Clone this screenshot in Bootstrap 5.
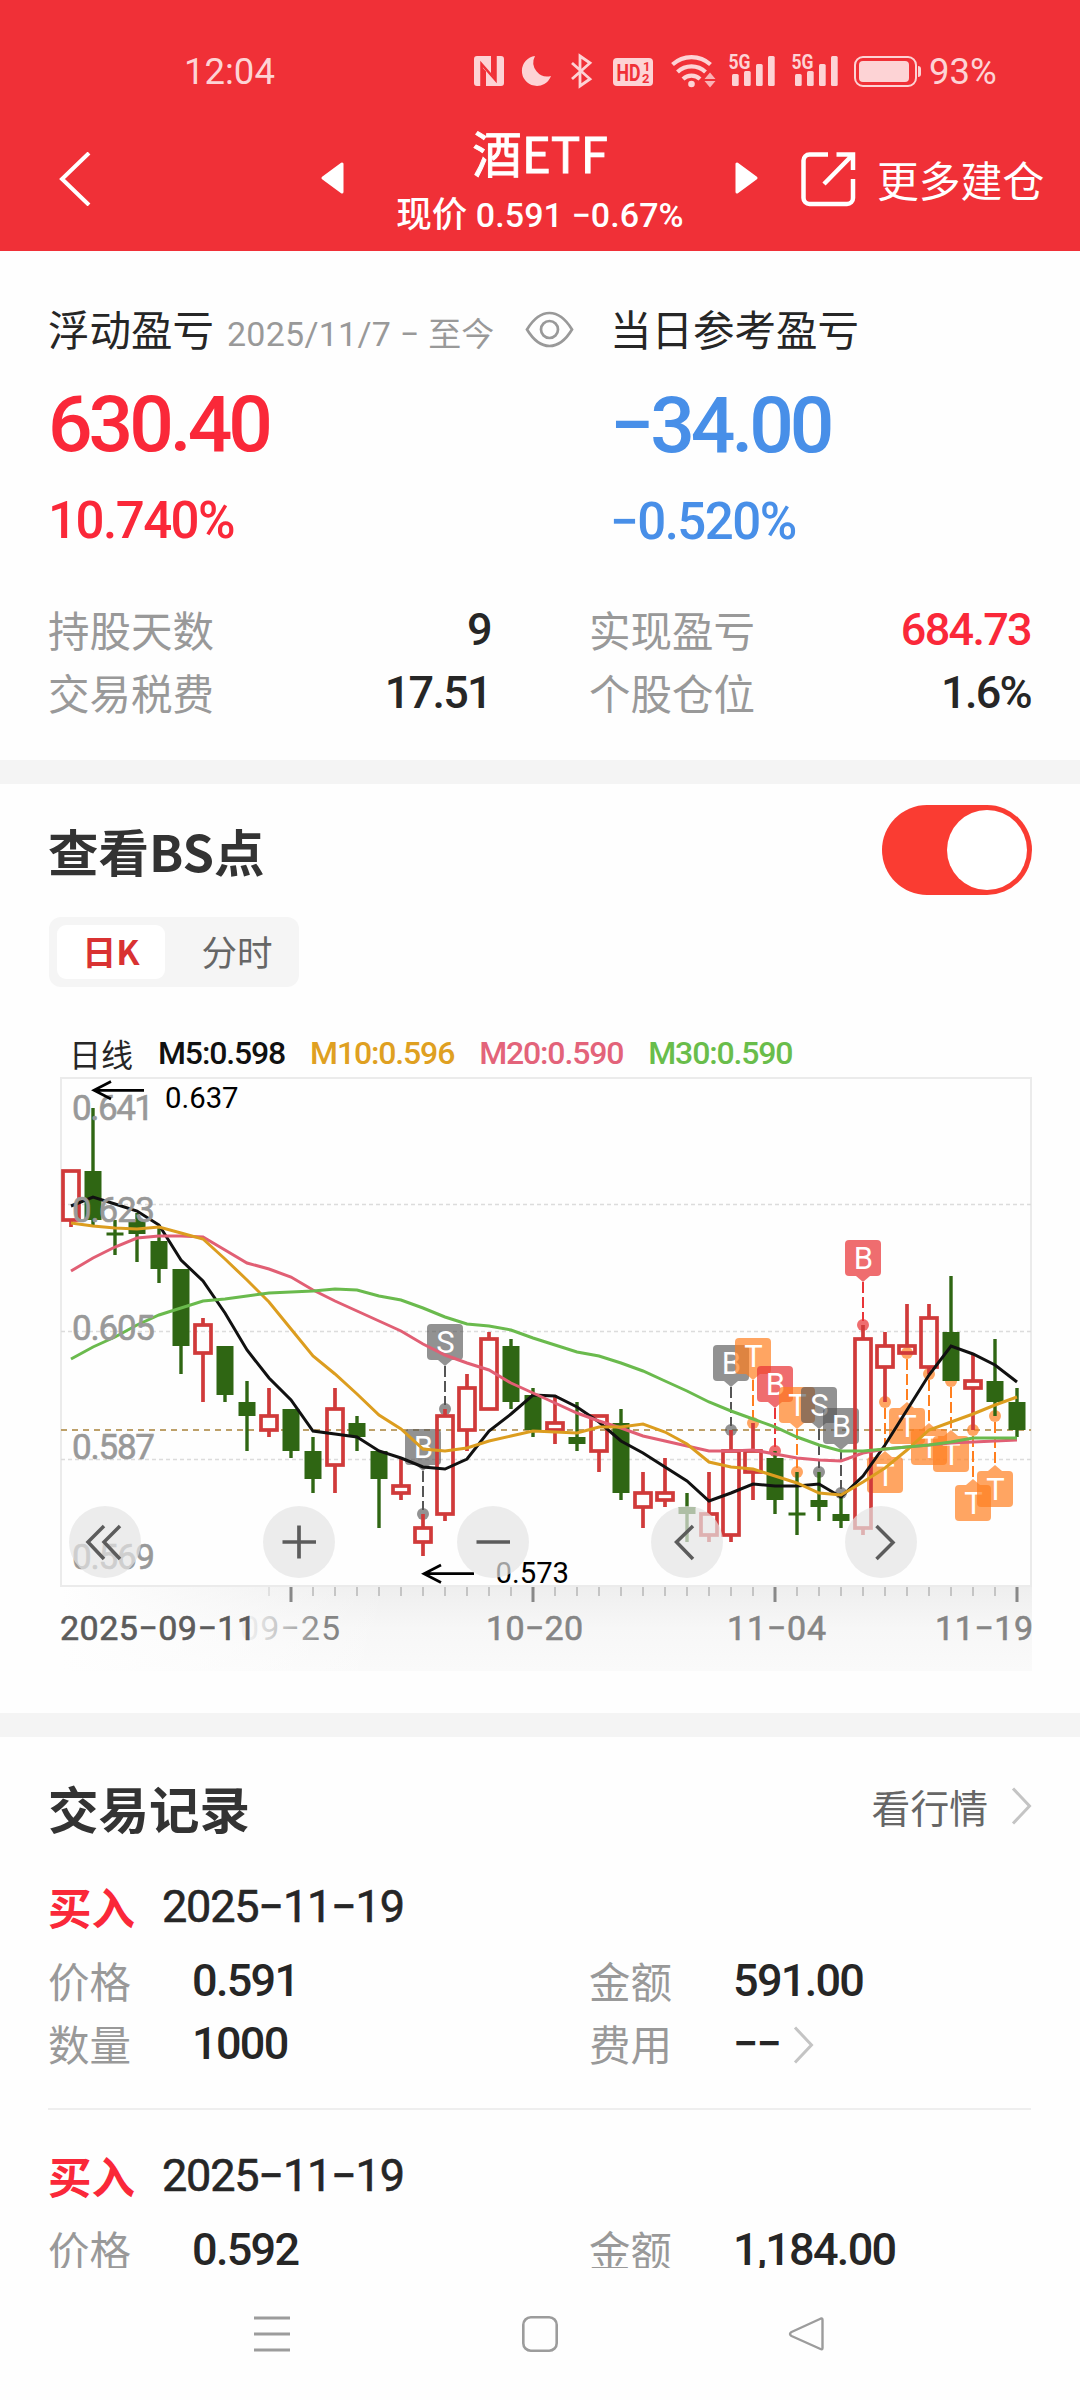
<!DOCTYPE html>
<html lang="zh-CN">
<head>
<meta charset="utf-8">
<meta name="viewport" content="width=device-width, initial-scale=1">
<title>酒ETF</title>
<link href="https://cdn.jsdelivr.net/npm/bootstrap@5.3.0/dist/css/bootstrap.min.css" rel="stylesheet">
<style>
  body { width: 1080px; height: 2400px; overflow: hidden; background: #fefefe; color: #262626; font-family: Roboto, "Noto Sans CJK SC", sans-serif; line-height: 1; }
  svg { display: block; flex: none; }
  .cjk { font-family: "Noto Sans CJK SC", sans-serif; letter-spacing: 0; white-space: nowrap; }
  .num { font-weight: 500; white-space: nowrap; letter-spacing: -1.7px; }
  .app-head { background: #f03037; height: 251px; color: #fff; }
  .status-row { height: 100px; padding: 44px 0 0 184px; color: #fdd3d5; font-size: 36.5px; line-height: 56px; }
  .status-icons { margin-left: 195px; }
  .title-row { padding-left: 59px; height: 151px; }
  .title-row > .nudge { padding-top: 52px; }
  .title-box { width: 390px; padding-top: 27px; }
  .fund-name { font-size: 49.5px; line-height: 50px; -webkit-text-stroke: .9px #fff; }
  .fund-price { font-size: 34px; line-height: 46px; margin-top: 12px; font-weight: 500; letter-spacing: .1px; }
  .fund-price .cjk { font-size: 35.5px; }
  .more-label { font-size: 41.8px; line-height: 56px; padding-top: 51px; margin-left: 21px; }
  .band { height: 24px; background: #f4f4f4; }
  .summary { height: 509px; padding: 46px 49px 0 48px; }
  .lbl { font-size: 41.5px; line-height: 63px; }
  .muted-c { color: #999; }
  .red-c { color: #fa2839; }
  .blue-c { color: #488fe8; }
  .range { font-size: 34px; color: #999; padding-top: 4px; line-height: 63px; margin-left: 13px; letter-spacing: .25px; }
  .range .cjk { font-size: 33px; }
  .half { width: 562px; }
  .profit { font-size: 78.5px; line-height: 90px; letter-spacing: -4px; margin-top: 19px; }
  .rate { font-size: 51px; line-height: 60px; margin-top: 22px; letter-spacing: -1.5px; }
  .stat-grid { margin-top: 46px; }
  .stat-l { width: 443px; }
  .stat-r { width: 442px; }
  .digits { font-size: 45px; line-height: 63px; }
  .chart-sec { height: 929px; padding-top: 21px; }
  .sec-title { font-size: 50.5px; font-weight: 700; color: #333; line-height: 90px; padding-left: 48px; }
  .toggle { width: 150px; height: 90px; border-radius: 45px; background: #fa3c32; padding: 5px; margin-right: 48px; }
  .knob { width: 80px; height: 80px; border-radius: 50%; background: #fff; }
  .seg { width: 250px; height: 70px; margin: 22px 0 0 49px; padding: 8px; border-radius: 12px; background: #f5f5f5; font-size: 35px; }
  .seg-item { width: 108px; height: 54px; line-height: 52px; border-radius: 9px; text-align: center; color: #666; font-size: 35.5px; }
  .seg-on { background: #fff; color: #d93232; font-weight: 700; font-size: 34px; }
  .legend-row { margin-top: 49px; height: 34px; padding-left: 69px; font-size: 32px; line-height: 34px; font-weight: 500; gap: 25px; }
  .legend-row .num { letter-spacing: -1.15px; }
  .chart-btns { position: absolute; left: 69px; top: 436px; gap: 122px; }
  .chart-btn { width: 72px; height: 72px; border-radius: 50%; background: rgba(228,228,228,.7); }
  .rec-head { padding: 40px 48px 0 48px; height: 132px; }
  .rec-head .sec-title { padding: 0; line-height: 60px; }
  .go { font-size: 38.8px; color: #666; line-height: 58px; }
  .record { height: 269px; padding: 0 49px 0 48px; }
  .buy { font-size: 43.5px; font-weight: 700; line-height: 76px; }
  .rec-date { font-size: 45px; line-height: 76px; letter-spacing: -1.2px; margin-left: 27px; font-weight: 400; -webkit-text-stroke: .6px #262626; }
  .rec-top { margin-bottom: 4px; }
  .rec-l { width: 541px; }
  .rec-k { width: 144px; }
  .rule { height: 2px; background: #eee; }
  .records { height: 531px; overflow: hidden; }
  .sys-nav { height: 132px; padding-left: 254px; padding-top: 48px; background: #fefefe; }
</style>
</head>
<body>
<header class="app-head">
  <div class="status-row d-flex">
    <span>12:04</span>
    <svg class="status-icons" width="455" height="56" viewBox="470 44 455 56" fill="#fdd3d5">
      <path d="M477 56h14v21l-9-10v19h-5a3 3 0 0 1-3-3V59a3 3 0 0 1 3-3z"/>
      <path d="M493 56h8a3 3 0 0 1 3 3v24a3 3 0 0 1-3 3h-15V68l9 10V56z"/>
      <path d="M481.500 86V64l14 16V56" fill="none" stroke="#f03037" stroke-width="2.500"/>
      <path d="M535 56a15 15 0 1 0 16 20a14 14 0 0 1-16-20z"/>
      <path d="M572 63l18 16-10 7V56l10 7-18 16" fill="none" stroke="#fdd3d5" stroke-width="2.800"/>
      <rect x="613" y="58" width="40" height="28" rx="4"/>
      <text x="616.500" y="80.500" font-size="23" font-weight="700" fill="#f03037" textLength="24" lengthAdjust="spacingAndGlyphs">HD</text>
      <text x="643" y="70.500" font-size="13" font-weight="700" fill="#f03037">1</text>
      <text x="642" y="83" font-size="13" font-weight="700" fill="#f03037">2</text>
      <g fill="none" stroke="#fdd3d5" stroke-width="4.200"><path d="M672.500 64.500a28 28 0 0 1 38 0"/><path d="M677.500 72a20.500 20.500 0 0 1 28 0"/><path d="M683 79a12.500 12.500 0 0 1 17 0"/></g>
      <circle cx="691.500" cy="84" r="3.300"/>
      <path d="M704.500 79l5.500-6.500 5.500 6.500zM704.500 81h11l-5.500 6.500z" opacity=".8"/>
      <g id="sig"><text x="728.500" y="68.500" font-size="20" font-weight="700" textLength="22" lengthAdjust="spacingAndGlyphs">5G</text>
      <rect x="732" y="74" width="6.700" height="12" rx="1.500"/><rect x="744" y="71" width="6.700" height="15" rx="1.500"/><rect x="756" y="64" width="6.700" height="22" rx="1.500"/><rect x="768" y="56" width="6.700" height="30" rx="1.500"/></g>
      <use href="#sig" x="63"/>
      <rect x="855" y="57" width="61" height="29" rx="8" fill="none" stroke="#fdd3d5" stroke-width="2"/>
      <rect x="859" y="61" width="50" height="21" rx="4"/><path d="M918 66q3 0 3 3v5q0 3-3 3z"/>
    </svg>
    <span class="ms-1">93%</span>
  </div>
  <div class="title-row d-flex">
    <svg class="nudge" width="32" height="106" viewBox="0 0 32 54"><path d="M30 1L3 27L30 53" fill="none" stroke="#fff" stroke-width="4"/></svg>
    <svg style="margin-left:229px" width="25" height="156" viewBox="0 0 25 156"><path d="M22 64v28L3 78z" fill="#fff" stroke="#fff" stroke-width="3" stroke-linejoin="round"/></svg>
    <div class="title-box text-center">
      <div class="fund-name cjk">酒ETF</div>
      <div class="fund-price"><span class="cjk">现价</span> 0.591 −0.67%</div>
    </div>
    <svg width="25" height="156" viewBox="0 0 25 156"><path d="M2 64v28l19-14z" fill="#fff" stroke="#fff" stroke-width="3" stroke-linejoin="round"/></svg>
    <svg style="margin:51px 0 0 40px" width="56" height="56" viewBox="0 0 56 56" fill="none" stroke="#fff" stroke-width="4.500"><path d="M28 3.500H9.500a6 6 0 0 0-6 6V47a6 6 0 0 0 6 6H47a6 6 0 0 0 6-6V28M36.500 3.500H53V19M52 4.500L24 33"/></svg>
    <div class="more-label cjk">更多建仓</div>
  </div>
</header>

<section class="summary">
  <div class="d-flex">
    <div class="half">
      <div class="d-flex" style="height:63px">
        <span class="lbl cjk">浮动盈亏</span>
        <span class="range text-nowrap">2025/11/7 − <span class="cjk">至今</span></span>
        <svg style="margin:14px 0 0 31px" width="49" height="37" viewBox="0 0 49 37" fill="none" stroke="#999" stroke-width="2.700"><path d="M2 18.500Q12 2 24.500 2T47 18.500Q37 35 24.500 35T2 18.500z"/><circle cx="24.500" cy="18.500" r="8.500"/></svg>
      </div>
      <div class="num profit red-c">630.40</div>
      <div class="num rate red-c">10.740%</div>
    </div>
    <div>
      <div class="lbl cjk">当日参考盈亏</div>
      <div class="num profit blue-c" style="margin-top:20px">−34.00</div>
      <div class="num rate blue-c">−0.520%</div>
    </div>
  </div>
  <div class="stat-grid">
    <div class="d-flex justify-content-between">
      <div class="stat-l d-flex justify-content-between"><span class="lbl cjk muted-c">持股天数</span><span class="num digits">9</span></div>
      <div class="stat-r d-flex justify-content-between"><span class="lbl cjk muted-c">实现盈亏</span><span class="num digits red-c">684.73</span></div>
    </div>
    <div class="d-flex justify-content-between">
      <div class="stat-l d-flex justify-content-between"><span class="lbl cjk muted-c">交易税费</span><span class="num digits">17.51</span></div>
      <div class="stat-r d-flex justify-content-between"><span class="lbl cjk muted-c">个股仓位</span><span class="num digits">1.6%</span></div>
    </div>
  </div>
</section>
<div class="band"></div>

<section class="chart-sec">
  <div class="d-flex justify-content-between">
    <div class="sec-title cjk">查看BS点</div>
    <div class="toggle d-flex justify-content-end"><span class="knob"></span></div>
  </div>
  <div class="seg d-flex">
    <div class="seg-item seg-on cjk">日K</div>
    <div class="seg-item cjk" style="margin-left:18px">分时</div>
  </div>
  <div class="legend-row d-flex">
    <span class="cjk fw-normal">日线</span>
    <span class="num" style="color:#111">M5:0.598</span>
    <span class="num" style="color:#dfa021">M10:0.596</span>
    <span class="num" style="color:#e3637a">M20:0.590</span>
    <span class="num" style="color:#69bd4b">M30:0.590</span>
  </div>
  <div class="position-relative">
    <svg id="kline" width="1080" height="610" viewBox="0 1070 1080 610" font-family="Roboto, sans-serif">
      <defs>
        <linearGradient id="axisV" x1="0" y1="0" x2="0" y2="1"><stop offset="0" stop-color="#eeeeee"/><stop offset=".5" stop-color="#f7f7f7"/><stop offset="1" stop-color="#fafafa"/></linearGradient>
        <linearGradient id="axisH" x1="0" y1="0" x2="1" y2="0"><stop offset="0" stop-color="#fefefe"/><stop offset="1" stop-color="#fefefe" stop-opacity="0"/></linearGradient>
        <linearGradient id="fadeTxt" gradientUnits="userSpaceOnUse" x1="250" y1="0" x2="325" y2="0"><stop offset="0" stop-color="#f0f0f0"/><stop offset="1" stop-color="#858585"/></linearGradient>
      </defs>
      <rect x="61" y="1586" width="971" height="85" fill="url(#axisV)"/>
      <rect x="61" y="1587" width="330" height="84" fill="url(#axisH)"/>
      <rect x="61" y="1078" width="970" height="508" fill="#fefefe" stroke="#ebebeb" stroke-width="2"/>
      <path d="M61 1204.500H1031M61 1331.500H1031M61 1459.500H1031" stroke="#dcdcdc" stroke-width="1.300" stroke-dasharray="4 3"/>
      <path d="M61 1430H1031" stroke="#bda069" stroke-width="1.800" stroke-dasharray="6 5"/>
      <g id="marks"></g>
      <g id="candles"></g>
      <g id="lines" fill="none" stroke-width="3"></g>
      <g fill="#999" font-size="35" stroke="#999" stroke-width=".6">
        <text x="72" y="1120" textLength="82">0.641</text><text x="72" y="1221.700" textLength="83">0.623</text><text x="72" y="1340" textLength="83">0.605</text><text x="72" y="1459" textLength="83">0.587</text><text x="72" y="1569" textLength="83">0.569</text>
      </g>
      <g fill="none" stroke="#000" stroke-width="2.700"><path d="M144 1090.300H94M111 1081.500L94 1090.300L111 1099"/><path d="M474 1573.700H424M441 1565L424 1573.700L441 1582.500"/></g>
      <text x="165" y="1107.700" font-size="29.300">0.637</text>
      <text x="495.500" y="1582.700" font-size="29.300">0.573</text>
      <g id="ticks"></g>
      <g font-size="34" stroke-width=".6">
        <text x="240" y="1640" textLength="100" fill="url(#fadeTxt)">09−25</text>
        <text x="60" y="1640" textLength="196" fill="#5c5c5c" stroke="#5c5c5c">2025−09−11</text>
        <text x="486" y="1640" textLength="97" fill="#858585" stroke="#858585">10−20</text>
        <text x="727" y="1640" textLength="99" fill="#858585" stroke="#858585">11−04</text>
        <text x="935" y="1640" textLength="98" fill="#858585" stroke="#858585">11−19</text>
      </g>
    </svg>
    <div class="chart-btns d-flex">
      <div class="chart-btn"><svg width="72" height="72" fill="none" stroke="#5c5c5c" stroke-width="3.500"><path d="M35 20L19 36L35 53M51 20L35 36L51 53"/></svg></div>
      <div class="chart-btn"><svg width="72" height="72" fill="none" stroke="#5c5c5c" stroke-width="3.700"><path d="M19.500 36H53M36 19.500V52.500"/></svg></div>
      <div class="chart-btn"><svg width="72" height="72" fill="none" stroke="#5c5c5c" stroke-width="3.700"><path d="M19.500 36H53"/></svg></div>
      <div class="chart-btn"><svg width="72" height="72" fill="none" stroke="#5c5c5c" stroke-width="3.500"><path d="M42 20L25.500 36L42 53"/></svg></div>
      <div class="chart-btn"><svg width="72" height="72" fill="none" stroke="#5c5c5c" stroke-width="3.500"><path d="M31.500 20L48 36.500L31.500 53"/></svg></div>
    </div>
  </div>
</section>
<div class="band"></div>

<section class="records">
  <div class="rec-head d-flex justify-content-between">
    <div class="sec-title cjk">交易记录</div>
    <div class="d-flex"><span class="go cjk">看行情</span><svg style="margin:10px 0 0 23px" width="21" height="38" viewBox="0 0 21 38"><path d="M2 1.500L18.500 19L2 36.500" fill="none" stroke="#c4c4c4" stroke-width="3"/></svg></div>
  </div>
  <div class="record">
    <div class="rec-top d-flex"><span class="buy cjk red-c">买入</span><span class="num rec-date">2025−11−19</span></div>
    <div class="d-flex">
      <div class="rec-l d-flex"><span class="rec-k lbl cjk muted-c">价格</span><span class="num digits">0.591</span></div>
      <div class="d-flex"><span class="rec-k lbl cjk muted-c">金额</span><span class="num digits">591.00</span></div>
    </div>
    <div class="d-flex">
      <div class="rec-l d-flex"><span class="rec-k lbl cjk muted-c">数量</span><span class="num digits">1000</span></div>
      <div class="d-flex"><span class="rec-k lbl cjk muted-c">费用</span><span class="num digits">−−</span><svg style="margin:14px 0 0 13px" width="21" height="38" viewBox="0 0 21 38"><path d="M2 1.500L18.500 19L2 36.500" fill="none" stroke="#c4c4c4" stroke-width="3"/></svg></div>
    </div>
    <div class="rule" style="margin-top:33px"></div>
  </div>
  <div class="record">
    <div class="rec-top d-flex"><span class="buy cjk red-c">买入</span><span class="num rec-date">2025−11−19</span></div>
    <div class="d-flex">
      <div class="rec-l d-flex"><span class="rec-k lbl cjk muted-c">价格</span><span class="num digits">0.592</span></div>
      <div class="d-flex"><span class="rec-k lbl cjk muted-c">金额</span><span class="num digits">1,184.00</span></div>
    </div>
  </div>
</section>

<nav class="sys-nav d-flex">
  <svg width="36" height="36"><path d="M0 2H36M0 18H36M0 34H36" stroke="#9c9c9c" stroke-width="3"/></svg>
  <svg style="margin-left:232px" width="36" height="36"><rect x="1.300" y="1.300" width="33.400" height="33.400" rx="7.500" fill="none" stroke="#9c9c9c" stroke-width="2.600"/></svg>
  <svg style="margin-left:230px" width="37" height="36"><path d="M33 2.500Q34.500 2 34.500 4V32Q34.500 34 32.500 33L3.500 20Q.5 18 3.500 16z" fill="none" stroke="#9c9c9c" stroke-width="2.400" stroke-linejoin="round"/></svg>
</nav>

<script src="https://cdn.jsdelivr.net/npm/bootstrap@5.3.0/dist/js/bootstrap.bundle.min.js"></script>
<script>
  // One entry per day: direction, high, body top, body bottom, low (thousandths)
  const days = `R628,628,621,620 G637,628,621,620 G621,619,619,616 G622,621,619,615 G620,618,614,612 G614,614,603,599 R607,606,602,595 G603,603,596,595 G598,595,593,588 R597,593,591,590 G594,594,588,587
G590,588,584,582 R597,594,586,582 G593,592,590,588 G588,588,584,577 R587,583,582,581 R579,577,575,573 R594,593,579,578 R599,597,591,588 R605,604,594,594 G604,603,595,594 G597,596,591,590 R596,592,591,589
G595,590,589,588 R593,593,588,585 G594,592,582,581 R585,582,580,577 R587,582,581,580 G582,580,579,575 R585,579,576,575 R591,588,576,575 R592,588,585,581 G588,587,581,579 G585,579,579,576 G585,581,580,578
G582,579,578,577 R606,604,577,576 R605,603,600,595 R609,603,602,602 R609,607,600,599 G613,605,598,598 R602,598,597,591 G604,598,595,593 G597,595,591,590`.split(/\s+/);
  const X = i => 71 + 22 * i, Y = v => 1108 + (637 - v) * 7;
  let out = '';
  days.forEach((d, i) => {
    const [h, a, b, l] = d.slice(1).split(',').map(Number), x = X(i);
    if (d[0] === 'R') {
      out += `<g fill="none" stroke="#d03a3a" stroke-width="3.700"><path d="M${x} ${Y(h)}V${Y(a)}M${x} ${Y(b)}V${Y(l)}"/><rect x="${x - 8}" y="${Y(a)}" width="16" height="${Y(b) - Y(a)}"/></g>`;
    } else {
      const t = a === b ? Y(a) - 1.5 : Y(a), k = a === b ? 3 : Y(b) - Y(a);
      out += `<g fill="#2f6613"><rect x="${x - 1.7}" y="${Y(h)}" width="3.400" height="${Y(l) - Y(h)}"/><rect x="${x - 8.5}" y="${t}" width="17" height="${k}"/></g>`;
    }
  });
  document.getElementById('candles').innerHTML = out;

  // Moving averages as drawn heights, one per day
  const avg = {
    '#111': [1206,1197,1204,1211,1225,1260,1281,1313,1350,1378,1400,1431,1434,1437,1451,1458,1467,1469,1459,1431,1414,1395,1396,1407,1422,1441,1453,1467,1481,1501,1493,1484,1486,1486,1484,1497,1476,1445,1410,1375,1346,1354,1365,1382],
    '#e15f74': [1271,1258,1247,1238,1236,1236,1237,1250,1263,1269,1277,1290,1301,1311,1321,1331,1344,1355,1363,1370,1383,1393,1403,1413,1421,1428,1436,1441,1446,1451,1451,1450,1454,1458,1460,1461,1453,1449,1447,1445,1443,1442,1441,1440],
    '#dc9d1f': [1223,1226,1228,1229,1227,1233,1239,1259,1280,1302,1329,1356,1374,1394,1415,1429,1449,1451,1448,1441,1436,1431,1432,1433,1427,1427,1424,1432,1444,1462,1467,1469,1476,1483,1493,1495,1482,1468,1450,1430,1422,1414,1405,1397],
    '#6aba4d': [1359,1347,1337,1325,1315,1308,1301,1299,1296,1293,1292,1291,1289,1290,1296,1300,1308,1317,1324,1326,1330,1338,1345,1352,1356,1363,1371,1381,1391,1402,1411,1419,1427,1437,1445,1451,1451,1449,1447,1445,1442,1438,1438,1438]
  };
  document.getElementById('lines').innerHTML = Object.entries(avg).map(([c, ys]) =>
    `<polyline stroke="${c}" points="${ys.map((y, i) => X(i) + ',' + y).join(' ')}"/>`).join('');

  // Trade flags: day, letter, colour, side (-1 above the high, 1 below the low)
  const grey = ['#555', .64], red = ['#e93538', .72], orange = ['#ff7f1f', .7];
  const flags = [[16,'B',grey,-1],[17,'S',grey,-1],[30,'B',grey,-1],[31,'T',orange,-1],[32,'B',red,-1],[33,'T',orange,-1],[34,'S',grey,-1],[35,'B',grey,-1],[36,'B',red,-1],
    [37,'T',orange,1],[38,'T',orange,1],[39,'T',orange,1],[40,'T',orange,1],[41,'T',orange,1],[42,'T',orange,1]];
  const dotY = {16:1514,17:1409,30:1430,31:1423,32:1451,33:1472,34:1472,35:1493,36:1325,37:1402,38:1353,39:1374,40:1381,41:1430,42:1416};
  document.getElementById('marks').innerHTML = flags.map(([i, t, [c, o], s]) => {
    const x = X(i), y = dotY[i], top = s < 0 ? y - 85 : y + 55;
    const tip = s < 0 ? `M${x - 7} ${top + 36}h14l-7 6z` : `M${x - 7} ${top}h14l-7 -6z`;
    const dash = s < 0 ? `M${x} ${top + 42}V${y - 4}` : `M${x} ${y + 6}V${top - 6}`;
    return `<g><path d="${dash}" stroke="${c}" stroke-width="2" stroke-dasharray="11 4"/><g fill="${c}" fill-opacity="${o}"><circle cx="${x}" cy="${y}" r="6"/><rect x="${x - 18}" y="${top}" width="36" height="36" rx="4"/><path d="${tip}"/></g>
      <text x="${x + .5}" y="${top + 29}" font-size="31" fill="#fff" text-anchor="middle">${t}</text></g>`;
  }).join('');

  let ticks = '';
  for (let i = 9; i < 44; i++) {
    const major = (i - 10) % 11 === 0;
    ticks += `<rect x="${X(i) - (major ? 1.5 : .5)}" y="1587" width="${major ? 3 : 1}" height="${major ? 15 : 9}" fill="${i === 9 ? '#ccc' : major ? '#888' : '#999'}"/>`;
  }
  document.getElementById('ticks').innerHTML = ticks;
</script>
</body>
</html>
